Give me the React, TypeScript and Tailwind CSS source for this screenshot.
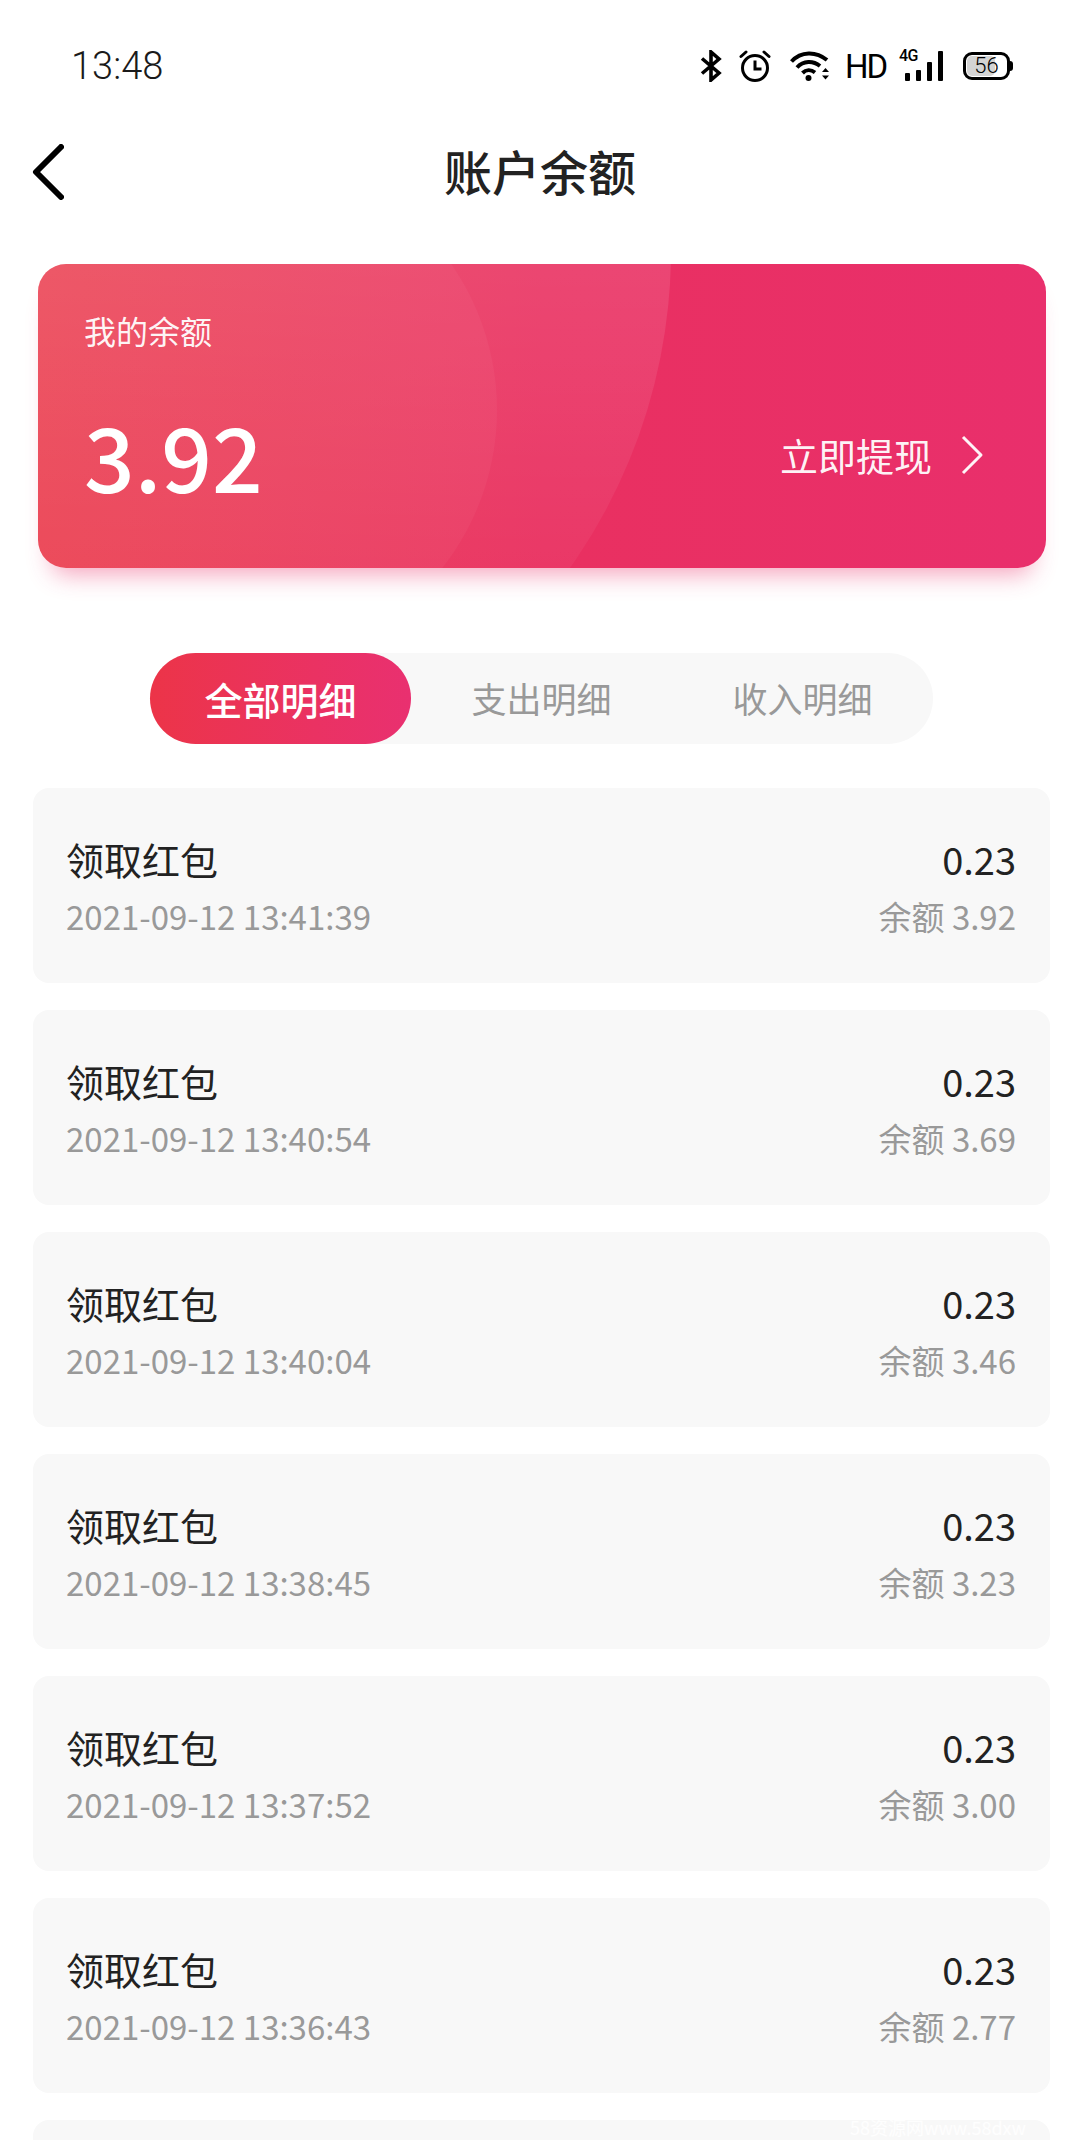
const records = [
  { time: "2021-09-12 13:41:39", balance: "3.92" },
  { time: "2021-09-12 13:40:54", balance: "3.69" },
  { time: "2021-09-12 13:40:04", balance: "3.46" },
  { time: "2021-09-12 13:38:45", balance: "3.23" },
  { time: "2021-09-12 13:37:52", balance: "3.00" },
  { time: "2021-09-12 13:36:43", balance: "2.77" },
];

const StatusIcons = () => (
  <div className="flex items-center text-black">
    {/* bluetooth */}
    <svg width="22" height="32" viewBox="0 0 22 32" fill="none" stroke="currentColor" strokeWidth="3.6">
      <path d="M2 8.5 19 23 11 30V2l8 7L2 23.5" />
    </svg>
    {/* alarm */}
    <svg className="ml-[17px]" width="32" height="32" viewBox="0 0 32 32" fill="none" stroke="currentColor" strokeWidth="3">
      <circle cx="16" cy="18" r="12.5" />
      <path d="M16 10.5V19h6.5" />
      <path d="M2 6.5 7 2M30 6.5 25 2" strokeLinecap="round" />
    </svg>
    {/* wifi */}
    <svg className="ml-[19px]" width="40" height="30" viewBox="0 0 40 30" fill="none" stroke="currentColor" strokeWidth="4">
      <path d="M1.5 10.5C11 0 26 0 37 9" />
      <path d="M7 16.5C13.5 9.5 23 9.5 30 15" />
      <path d="M12.5 22C16 18.5 21 18.5 25 21.5" />
      <circle cx="18.5" cy="27" r="3" fill="currentColor" stroke="none" />
      <path d="M32 21l3.5-4 3.5 4zM32 24.5l3.5 4 3.5-4z" fill="currentColor" stroke="none" />
    </svg>
    <span className="ml-[15px] w-[37px] text-[33px] leading-none tracking-[-2px] font-['Roboto',sans-serif] font-normal">HD</span>
    {/* 4G signal */}
    <div className="relative ml-[17px] h-[30px] w-[45px]">
      <span className="absolute left-0 top-[-3px] text-[16px] leading-none font-medium tracking-[-0.5px] font-['Roboto',sans-serif]">4G</span>
      <svg className="absolute left-0 top-0" width="45" height="30" viewBox="0 0 45 30" fill="currentColor">
        <rect x="6" y="22" width="5" height="8" rx="1" />
        <rect x="17" y="19" width="5" height="11" rx="1" />
        <rect x="28" y="11" width="5" height="19" rx="1" />
        <rect x="39" y="0" width="5" height="30" rx="1" />
      </svg>
    </div>
    {/* battery */}
    <div className="relative ml-[19px] flex h-[28px] w-[47px] items-center justify-center rounded-[9px] border-[3px] border-black">
      <div className="absolute inset-y-[1px] left-[1px] w-[28px] rounded-[5px] bg-[#d4d4d4]" />
      <span className="relative text-[22px] leading-none font-['Roboto',sans-serif] font-light">56</span>
      <div className="absolute right-[-6px] h-[10px] w-[3px] rounded-r-full bg-black" />
    </div>
  </div>
);

const App = () => {
  return (
    <div className="relative h-[2140px] w-[1080px] overflow-hidden bg-white font-['Noto_Sans_CJK_SC','Noto_Sans',sans-serif]">
      <div className="flex h-[132px] items-center justify-between pl-[71px] pr-[70px]">
        <span className="text-[38px] font-light leading-none text-[#1a1a1a] font-['Roboto',sans-serif]">13:48</span>
        <StatusIcons />
      </div>

      <div className="relative flex h-[82px] items-center justify-center pb-[6px]">
        <svg className="absolute left-[32px] top-[12px]" width="32" height="56" viewBox="0 0 32 56" fill="none" stroke="black" strokeWidth="6" strokeLinecap="round" strokeLinejoin="round">
          <path d="M29 3 4 28l25 25" />
        </svg>
        <h1 className="text-[48px] font-medium leading-none text-[#222222]">账户余额</h1>
      </div>

      <section className="relative mx-[38px] mt-[50px] h-[304px] w-[1008px] rounded-[28px] shadow-[0_20px_24px_-14px_rgba(233,48,107,0.45)]">
        <div className="relative h-full overflow-hidden rounded-[28px] bg-gradient-to-r from-[#ea3d4e] via-[#e93060] to-[#e92f6c] pl-[46px] pr-[62px] pt-[46px]">
          <div className="absolute left-[-469px] top-[-565px] h-[1102px] w-[1102px] rounded-full bg-[linear-gradient(180deg,rgba(255,255,255,0.11)_51%,rgba(255,255,255,0.04)_79%)]" />
          <div className="absolute left-[-51px] top-[-109px] h-[510px] w-[510px] rounded-full bg-white/[0.035]" />
          <div className="relative">
            <div className="text-[32px] leading-[40px] text-white/95">我的余额</div>
            <div className="mt-[49px] flex items-center justify-between">
              <span className="text-[89px] font-medium leading-[112px] text-white">3.92</span>
              <span className="flex items-center text-[38px] leading-none text-white/95">
                立即提现
                <svg className="ml-[28px]" width="24" height="40" viewBox="0 0 24 40" fill="none" stroke="currentColor" strokeWidth="3" strokeLinejoin="round">
                  <path d="M3 2l18 18L3 38" />
                </svg>
              </span>
            </div>
          </div>
        </div>
      </section>

      <div className="ml-[150px] mt-[85px] flex h-[91px] w-[783px] rounded-full bg-[#f8f8f8] text-[35px]">
        <div className="flex w-[261px] items-center justify-center rounded-full bg-gradient-to-r from-[#ec3448] to-[#e93070] text-[38px] font-medium text-white">
          全部明细
        </div>
        <div className="flex w-[261px] items-center justify-center text-[#999999]">支出明细</div>
        <div className="flex w-[261px] items-center justify-center text-[#999999]">收入明细</div>
      </div>

      <div className="ml-[33px] mt-[44px] flex w-[1017px] flex-col gap-[27px]">
        {records.map((record) => (
          <div key={record.time} className="flex h-[195px] items-start justify-between rounded-[16px] bg-[#f8f8f8] pl-[33px] pr-[34px] pt-[42px]">
            <div>
              <div className="text-[38px] leading-[58px] text-[#222222]">领取红包</div>
              <div className="text-[33px] leading-[56px] text-[#999999]">{record.time}</div>
            </div>
            <div className="text-right">
              <div className="text-[38px] leading-[58px] text-[#222222]">0.23</div>
              <div className="text-[33px] leading-[56px] text-[#999999]">余额 {record.balance}</div>
            </div>
          </div>
        ))}
        <div className="h-[195px] rounded-[16px] bg-[#f8f8f8]" />
      </div>

      <span className="absolute left-[850px] top-[2117px] text-[18px] leading-[20px] text-white/80">58资源网www.58dxw</span>
    </div>
  );
};

export default App;
